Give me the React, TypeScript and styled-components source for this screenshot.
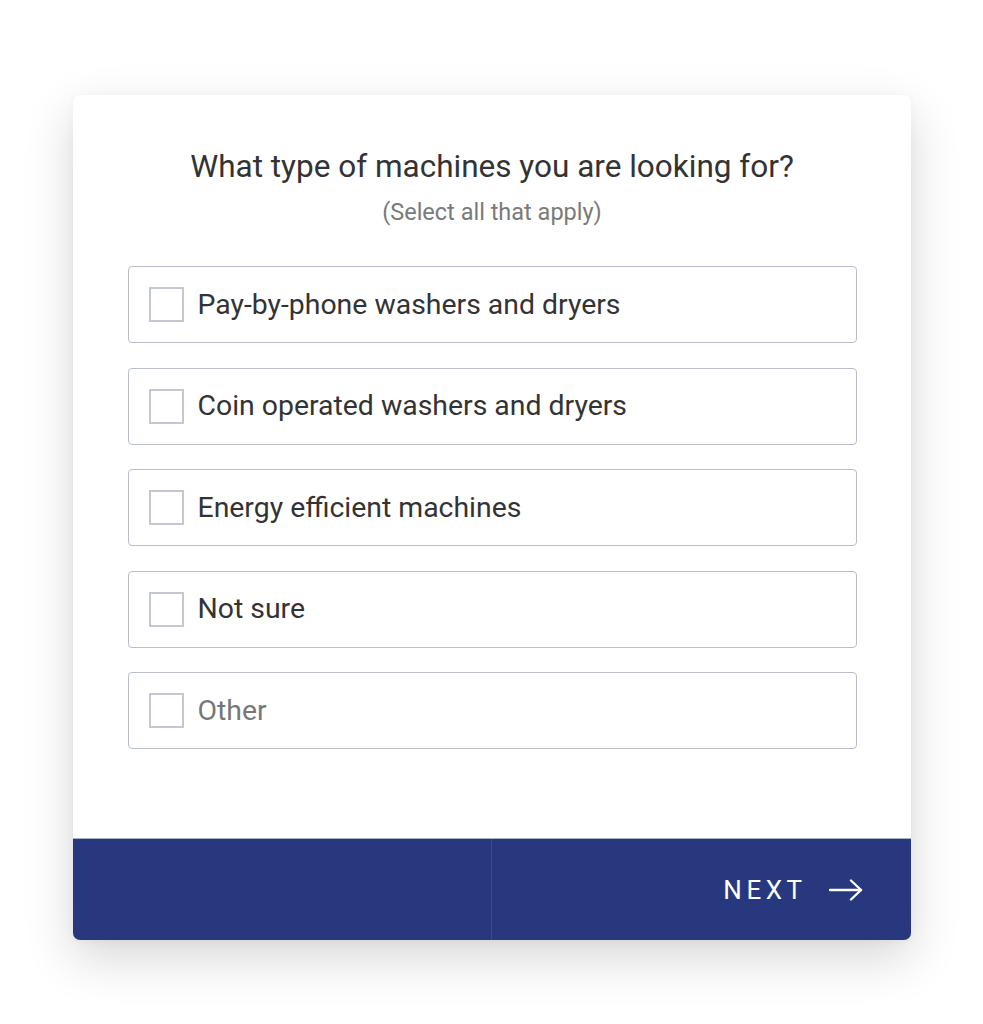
import React from 'react'
import styled, {createGlobalStyle} from 'styled-components'

const GlobalStyle = createGlobalStyle`
  body {
    margin: 0;
    background: #ffffff;
    font-family: Roboto, "Liberation Sans", Arial, sans-serif;
  }
`

const PageWrapper = styled.div`
  display: flex;
  justify-content: center;
  padding-top: 95px;
  padding-bottom: 84px;
`

const Card = styled.div`
  width: 838px;
  background: white;
  border-radius: 7px;
  box-shadow: 0 18px 50px rgba(0, 0, 0, 0.16), 0 2px 8px rgba(0, 0, 0, 0.04);
  overflow: hidden;
  display: flex;
  flex-direction: column;
`

const Body = styled.div`
  padding: 53px 54px 89px 55px;
  display: flex;
  flex-direction: column;
`

const Title = styled.h1`
  margin: 0;
  font-size: 31.5px;
  line-height: 38px;
  font-weight: 400;
  color: #333333;
  text-align: center;
`

const Subtitle = styled.div`
  margin-top: 12px;
  font-size: 23.5px;
  line-height: 28px;
  color: #7a7a7a;
  text-align: center;
`

const OptionList = styled.div`
  margin-top: 40px;
  display: flex;
  flex-direction: column;
  gap: 24.5px;
`

const Option = styled.label`
  height: 77px;
  box-sizing: border-box;
  border: 1px solid #b8bccd;
  border-radius: 4px;
  display: flex;
  align-items: center;
  padding-left: 20px;
  gap: 14px;
  cursor: pointer;
`

const CheckBox = styled.span`
  width: 35px;
  height: 35px;
  box-sizing: border-box;
  border: 2px solid #c3c7d6;
  background: white;
`

const OptionText = styled.span<{$muted?: boolean}>`
  font-size: 28.4px;
  line-height: 32px;
  color: ${(p) => (p.$muted ? '#777777' : '#333333')};
`

const Footer = styled.div`
  height: 102px;
  background: #27387f;
  border-top: 1px solid #a9b0c8;
  box-sizing: border-box;
  display: flex;
`

const FooterHalf = styled.div<{$right?: boolean}>`
  flex: 1;
  display: flex;
  align-items: center;
  justify-content: flex-end;
  padding-right: 48px;
  border-left: ${(p) => (p.$right ? '1px solid #3a4a8c' : 'none')};
`

const NextButton = styled.button`
  background: none;
  border: none;
  padding: 0;
  display: flex;
  align-items: center;
  gap: 22px;
  color: white;
  font-family: Roboto, "Liberation Sans", Arial, sans-serif;
  font-size: 26px;
  letter-spacing: 4.5px;
  cursor: pointer;
`

const options = [
  'Pay-by-phone washers and dryers',
  'Coin operated washers and dryers',
  'Energy efficient machines',
  'Not sure',
]

function App() {
  return (
    <>
      <GlobalStyle />
      <PageWrapper>
        <Card>
          <Body>
            <Title>What type of machines you are looking for?</Title>
            <Subtitle>(Select all that apply)</Subtitle>
            <OptionList>
              {options.map((o) => (
                <Option key={o}>
                  <CheckBox />
                  <OptionText>{o}</OptionText>
                </Option>
              ))}
              <Option>
                <CheckBox />
                <OptionText $muted>Other</OptionText>
              </Option>
            </OptionList>
          </Body>
          <Footer>
            <FooterHalf />
            <FooterHalf $right>
              <NextButton>
                NEXT
                <svg width="34" height="22" viewBox="0 0 34 22" fill="none" stroke="white" strokeWidth="2.4" strokeLinecap="round" strokeLinejoin="round">
                  <path d="M1 11h31" />
                  <path d="M22 1.5l10 9.5-10 9.5" />
                </svg>
              </NextButton>
            </FooterHalf>
          </Footer>
        </Card>
      </PageWrapper>
    </>
  )
}

export default App
